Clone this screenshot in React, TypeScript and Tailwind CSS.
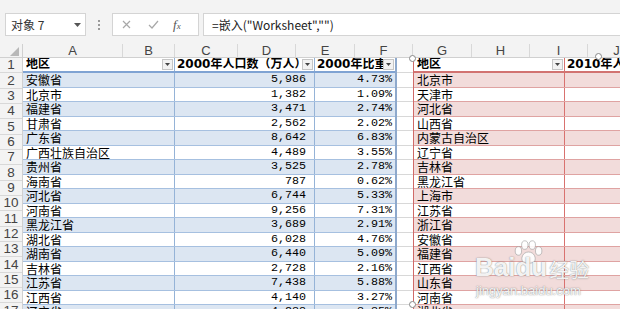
import React from "react";

const t1: [string, string, string][] = [
  ["安徽省", "5,986", "4.73%"],
  ["北京市", "1,382", "1.09%"],
  ["福建省", "3,471", "2.74%"],
  ["甘肃省", "2,562", "2.02%"],
  ["广东省", "8,642", "6.83%"],
  ["广西壮族自治区", "4,489", "3.55%"],
  ["贵州省", "3,525", "2.78%"],
  ["海南省", "787", "0.62%"],
  ["河北省", "6,744", "5.33%"],
  ["河南省", "9,256", "7.31%"],
  ["黑龙江省", "3,689", "2.91%"],
  ["湖北省", "6,028", "4.76%"],
  ["湖南省", "6,440", "5.09%"],
  ["吉林省", "2,728", "2.16%"],
  ["江苏省", "7,438", "5.88%"],
  ["江西省", "4,140", "3.27%"],
  ["辽宁省", "4,238", "3.35%"],
];

const t2 = [
  "北京市", "天津市", "河北省", "山西省", "内蒙古自治区", "辽宁省", "吉林省", "黑龙江省",
  "上海市", "江苏省", "浙江省", "安徽省", "福建省", "江西省", "山东省", "河南省", "湖北省",
];

const cols: [string, number][] = [
  ["A", 100], ["B", 52], ["C", 63], ["D", 58], ["E", 59], ["F", 58], ["G", 59], ["H", 58], ["I", 58], ["J", 58],
];

const cjk = { fontFamily: '"Noto Sans CJK SC", sans-serif' };
const head = { fontFamily: '"DejaVu Sans", "Noto Sans CJK SC", sans-serif' };
const mono = { fontFamily: '"Liberation Mono", monospace' };
const ui = { fontFamily: '"Liberation Sans", "Noto Sans CJK SC", sans-serif' };
const wm = { textShadow: "0 0 1px rgba(90,90,90,0.7), 0 0 2px rgba(120,120,120,0.4)" };

function Drop() {
  return (
    <div className="w-[11px] h-[11px] shrink-0 bg-[#f2f2f2] border border-[#c6c6c6] flex items-center justify-center">
      <svg width="5" height="3" viewBox="0 0 5 3"><path d="M0 0H5L2.5 3Z" fill="#444" /></svg>
    </div>
  );
}

export default function App() {
  return (
    <div className="w-[620px] h-[309px] overflow-hidden bg-[#f3f3f3] relative flex flex-col" style={ui}>
      <div className="h-[13px] shrink-0 bg-[#f3f3f3]" />
      {/* formula bar */}
      <div className="h-[23px] shrink-0 flex">
        <div className="ml-[5px] w-[81px] bg-white border border-[#d4d4d4] flex items-center pl-[5px] pr-[4px]">
          <span className="flex-1 text-[12px] leading-[16px] text-[#333]" style={cjk}>对象 7</span>
          <svg width="7" height="4" viewBox="0 0 7 4"><path d="M0 0H7L3.5 4Z" fill="#555" /></svg>
        </div>
        <div className="w-[26px] flex flex-col items-center justify-center gap-[2px]">
          <div className="w-[2px] h-[2px] bg-[#9a9a9a]" />
          <div className="w-[2px] h-[2px] bg-[#9a9a9a]" />
          <div className="w-[2px] h-[2px] bg-[#9a9a9a]" />
        </div>
        <div className="w-[87px] bg-white border border-[#d4d4d4] flex items-center pl-[9px]">
          <svg width="9" height="9" viewBox="0 0 9 9" className="mr-[17px]"><path d="M1 1L8 8M8 1L1 8" stroke="#a8a8a8" strokeWidth="1.2" /></svg>
          <svg width="11" height="9" viewBox="0 0 11 9" className="mr-[14px]"><path d="M1 5L4 8L10 1" stroke="#a8a8a8" strokeWidth="1.2" fill="none" /></svg>
          <span className="text-[13px] italic text-[#555]" style={{ fontFamily: '"Liberation Serif", serif' }}>f<span className="text-[9px]">x</span></span>
        </div>
        <div className="ml-[4px] flex-1 bg-white border border-[#d4d4d4] border-r-0 flex items-center pl-[8px]">
          <span className="text-[12px] leading-[16px] text-[#222]" style={cjk}>=嵌入("Worksheet","")</span>
        </div>
      </div>
      <div className="h-[8px] shrink-0" />
      {/* column headers */}
      <div className="h-[14px] shrink-0 flex border-b border-[#d0d0d0]">
        <div className="w-[23px] shrink-0 border-r border-[#d0d0d0] flex items-end justify-end pr-[3px] pb-[1px]">
          <svg width="9" height="9" viewBox="0 0 9 9"><path d="M9 0V9H0Z" fill="#b8b8b8" /></svg>
        </div>
        {cols.map(([c, w]) => (
          <div key={c} className="shrink-0 border-r border-[#d8d8d8] flex items-center justify-center text-[13px] leading-none text-[#444]" style={{ width: w }}>
            {c}
          </div>
        ))}
      </div>
      {/* body */}
      <div className="flex-1 flex overflow-hidden">
        <div className="w-[23px] shrink-0 flex flex-col border-r border-[#d0d0d0]">
          {Array.from({ length: 17 }, (_, i) => (
            <div key={i} className="h-[15.33px] shrink-0 border-b border-[#d8d8d8] flex items-center justify-center text-[13.5px] leading-none text-[#444]">
              {i + 1}
            </div>
          ))}
        </div>
        {/* table 1 */}
        <div className="w-[374px] shrink-0 flex flex-col bg-white border-r-2 border-[#8ea9cc]">
          <div className="h-[15px] shrink-0 flex border-b-2 border-[#7fa3d3] text-[12px] leading-[13px] font-bold text-black" style={head}>
            <div className="w-[152px] shrink-0 flex items-center pl-[3px] pr-[1px] border-r border-[#95b3d7]">
              <div className="flex-1 overflow-hidden whitespace-nowrap">地区</div><Drop />
            </div>
            <div className="w-[140px] shrink-0 flex items-center pl-[2px] pr-[1px] border-r border-[#95b3d7]">
              <div className="flex-1 overflow-hidden whitespace-nowrap">2000年人口数（万人）</div><Drop />
            </div>
            <div className="w-[80px] shrink-0 flex items-center pl-[2px] pr-[1px]">
              <div className="flex-1 overflow-hidden whitespace-nowrap">2000年比重</div><Drop />
            </div>
          </div>
          {t1.map(([n, p, r], i) => (
            <div key={n} className={`h-[14.5px] shrink-0 flex border-b border-[#a6c0e0] text-black ${i % 2 === 0 ? "bg-[#dce6f2]" : "bg-white"}`}>
              <div className="w-[152px] shrink-0 border-r border-[#95b3d7] pl-[3px] flex items-center text-[12px] leading-[13px] whitespace-nowrap" style={cjk}>{n}</div>
              <div className="w-[140px] shrink-0 border-r border-[#95b3d7] pr-[8px] flex items-center justify-end text-[11.7px] leading-[13px]" style={mono}>{p}</div>
              <div className="w-[80px] shrink-0 pr-[3px] flex items-center justify-end text-[11.7px] leading-[13px]" style={mono}>{r}</div>
            </div>
          ))}
        </div>
        {/* gap grid */}
        <div className="w-[16px] shrink-0 flex flex-col bg-white">
          <div className="h-[15px] shrink-0 border-b border-[#d8d8d8]" />
          {Array.from({ length: 17 }, (_, i) => (
            <div key={i} className="h-[14.5px] shrink-0 border-b border-[#d8d8d8]" />
          ))}
        </div>
        {/* table 2 */}
        <div className="flex-1 flex flex-col bg-white border-l border-[#d06a68]">
          <div className="h-[15px] shrink-0 flex border-b-2 border-[#d27371] text-[12px] leading-[13px] font-bold text-black" style={head}>
            <div className="w-[151px] shrink-0 flex items-center pl-[3px] pr-[1px] border-r border-[#d9726f]">
              <div className="flex-1 overflow-hidden whitespace-nowrap">地区</div><Drop />
            </div>
            <div className="flex-1 flex items-center pl-[2px] overflow-hidden whitespace-nowrap">2010年人口数（万人）</div>
          </div>
          {t2.map((n, i) => (
            <div key={n} className={`h-[14.5px] shrink-0 flex border-b border-[#dfa3a2] text-black ${i % 2 === 0 ? "bg-[#f2dcdb]" : "bg-white"}`}>
              <div className="w-[151px] shrink-0 border-r border-[#d9726f] pl-[3px] flex items-center text-[12px] leading-[13px] whitespace-nowrap" style={cjk}>{n}</div>
              <div className="flex-1" />
            </div>
          ))}
        </div>
      </div>
      {/* selection handles */}
      <div className="absolute left-[409px] top-[55px] w-[7px] h-[7px] rounded-full bg-white border border-[#888]" />
      <div className="absolute left-[409px] top-[301px] w-[7px] h-[7px] rounded-full bg-white border border-[#888]" />
      <div className="absolute left-[595px] top-[53px] w-[7px] h-[7px] rounded-full bg-white border border-[#888]" />
      {/* watermark */}
      <div className="absolute left-[472px] top-[238px] w-[120px] h-[60px] pointer-events-none">
        <svg className="absolute left-[40px] top-[2px]" width="32" height="24" viewBox="0 0 30 22">
          <g fill="#ffffff" fillOpacity="0.9" stroke="#9a9a9a" strokeOpacity="0.7" strokeWidth="0.8">
            <ellipse cx="6" cy="10" rx="3" ry="4" />
            <ellipse cx="12" cy="4.5" rx="3" ry="4" />
            <ellipse cx="19" cy="4.5" rx="3" ry="4" />
            <ellipse cx="25" cy="10" rx="3" ry="4" />
            <path d="M15.5 11C10 11 8 17 10 20C12 22 19 22 21 20C23 17 21 11 15.5 11Z" />
          </g>
        </svg>
        <div className="absolute left-[3px] top-[16px] flex items-end text-[26px] leading-none font-bold text-white/90" style={{ fontFamily: '"Liberation Sans", sans-serif', ...wm }}>
          <span>Baidu</span>
          <span className="ml-[2px] text-[20px] font-normal" style={cjk}>经验</span>
        </div>
        <div className="absolute left-[4px] top-[46px] text-[13px] leading-none text-white/90" style={{ fontFamily: '"Liberation Sans", sans-serif', ...wm }}>
          jingyan.baidu.com
        </div>
      </div>
    </div>
  );
}
